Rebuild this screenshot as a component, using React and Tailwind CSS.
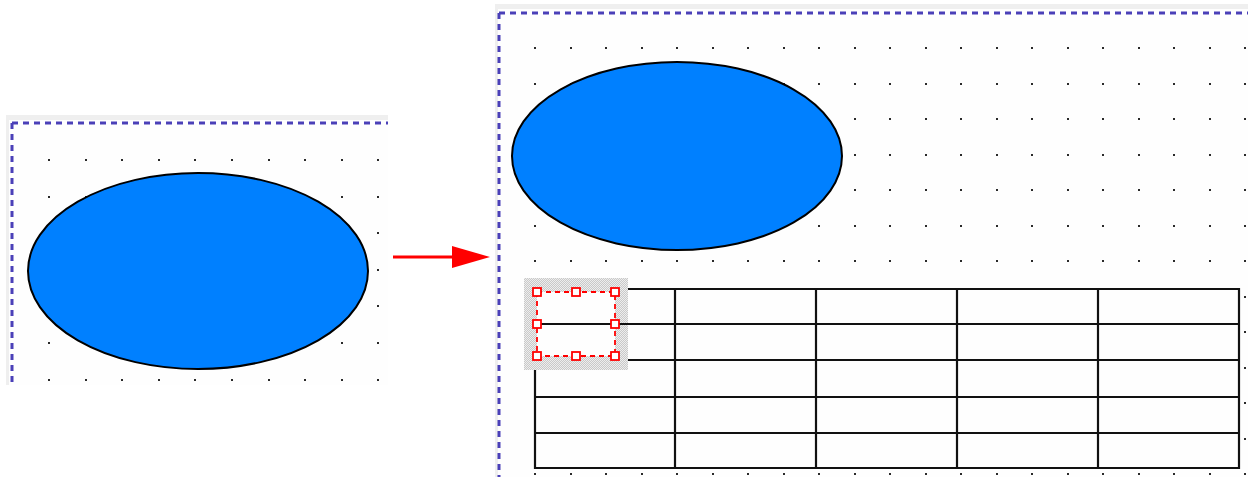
import React from 'react';

const DASH = '#4a40b8';

// dotted grid for a canvas
const Dots = ({ x0, y0, step, nx, ny }) => {
  const dots = [];
  for (let j = 0; j < ny; j++) {
    for (let i = 0; i < nx; i++) {
      dots.push(
        <rect key={`${i}-${j}`} x={Math.round(x0 + step * i) - 1} y={Math.round(y0 + step * j) - 1} width="2" height="2" fill="#2a2a2a" />
      );
    }
  }
  return <g>{dots}</g>;
};

// gray band plus dashed frame along top and left
const Frame = ({ w, h, dx, dy }) => (
  <g>
    <rect x="0" y="0" width={w} height="5" fill="#efefef" />
    <rect x="0" y="0" width="3" height={h} fill="#efefef" />
    <line x1={dx} y1={dy} x2={w} y2={dy} stroke={DASH} strokeWidth="3" strokeDasharray="6 5" />
    <line x1={dx} y1={dy} x2={dx} y2={h} stroke={DASH} strokeWidth="3" strokeDasharray="6 5" />
  </g>
);

const LeftCanvas = () => (
  <svg width="382" height="270" className="mt-[115px] ml-[6px] shrink-0 block">
    <rect width="382" height="270" fill="#fefefe" />
    <Frame w={382} h={270} dx={6} dy={8} />
    <Dots x0={43} y0={45} step={36.6} nx={10} ny={7} />
    <ellipse cx="192" cy="156" rx="170" ry="98" fill="#0080ff" stroke="#000" strokeWidth="2" />
  </svg>
);

const Arrow = () => (
  <svg width="107" height="28" className="mt-[244px] shrink-0 block">
    <line x1="5" y1="13" x2="66" y2="13" stroke="#ff0000" strokeWidth="3" />
    <polygon points="64,2 64,24 102,13" fill="#ff0000" />
  </svg>
);

const cols = [535, 675, 816, 957, 1098, 1239].map((v) => v - 495);
const rows = [289, 324, 360, 397, 433, 468].map((v) => v - 4);

const Handle = ({ x, y }) => (
  <rect x={x - 4} y={y - 4} width="8" height="8" fill="#fff" stroke="#ff0000" strokeWidth="1.8" />
);

const RightCanvas = () => {
  const left = cols[0];
  const right = cols[cols.length - 1];
  const top = rows[0];
  const bottom = rows[rows.length - 1];
  // selection box, local coords
  const sx = 524 - 495, sy = 278 - 4, sw = 104, sh = 92;
  const rx1 = 537 - 495, ry1 = 292 - 4, rx2 = 615 - 495, ry2 = 356 - 4;
  const mx = (rx1 + rx2) / 2, my = rows[1];
  return (
    <svg width="753" height="473" className="mt-[4px] shrink-0 block">
      <defs>
        <pattern id="hatch" width="2" height="2" patternUnits="userSpaceOnUse">
          <rect width="2" height="2" fill="#ededed" />
          <rect width="1" height="1" fill="#c9c9c9" />
          <rect x="1" y="1" width="1" height="1" fill="#c9c9c9" />
        </pattern>
      </defs>
      <rect width="753" height="473" fill="#fefefe" />
      <Frame w={753} h={473} dx={4} dy={9} />
      <Dots x0={40} y0={44} step={35.5} nx={21} ny={13} />
      <ellipse cx="182" cy="152" rx="165" ry="94" fill="#0080ff" stroke="#000" strokeWidth="2" />

      <rect x={left} y={top} width={right - left} height={bottom - top} fill="#fefefe" />
      {rows.map((y) => (
        <line key={`r${y}`} x1={left - 1} y1={y} x2={right + 1} y2={y} stroke="#111" strokeWidth="2.2" />
      ))}
      {cols.map((x) => (
        <line key={`c${x}`} x1={x} y1={top - 1} x2={x} y2={bottom + 1} stroke="#111" strokeWidth="2.2" />
      ))}

      {/* selected cell */}
      <rect x={sx} y={sy} width={sw} height={sh} fill="url(#hatch)" />
      <rect x={rx1} y={ry1} width={rx2 - rx1} height={ry2 - ry1} fill="#fefefe" />
      <line x1={left - 2} y1={my} x2={sx + sw} y2={my} stroke="#111" strokeWidth="2.2" />
      <rect x={rx1} y={ry1} width={rx2 - rx1} height={ry2 - ry1} fill="none" stroke="#ff0000" strokeWidth="1.8" strokeDasharray="5 4" />
      <Handle x={rx1} y={ry1} />
      <Handle x={mx} y={ry1} />
      <Handle x={rx2} y={ry1} />
      <Handle x={rx1} y={my} />
      <Handle x={rx2} y={my} />
      <Handle x={rx1} y={ry2} />
      <Handle x={mx} y={ry2} />
      <Handle x={rx2} y={ry2} />
    </svg>
  );
};

const App = () => {
  return (
    <div className="w-[1248px] h-[477px] bg-white flex items-start overflow-hidden">
      <LeftCanvas />
      <Arrow />
      <RightCanvas />
    </div>
  );
};

export default App;
